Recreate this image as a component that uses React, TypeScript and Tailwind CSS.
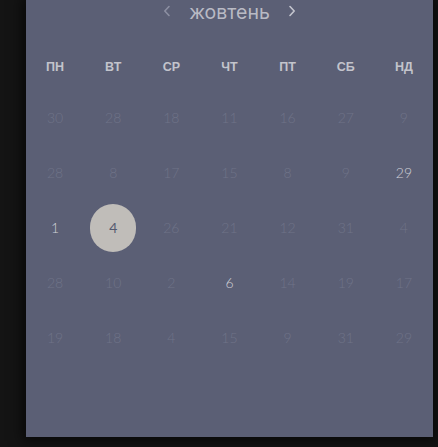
const weekdays = ['ПН', 'ВТ', 'СР', 'ЧТ', 'ПТ', 'СБ', 'НД'];

type Day = { n: number; bright?: boolean; selected?: boolean };

const rows: Day[][] = [
  [{ n: 30 }, { n: 28 }, { n: 18 }, { n: 11 }, { n: 16 }, { n: 27 }, { n: 9 }],
  [{ n: 28 }, { n: 8 }, { n: 17 }, { n: 15 }, { n: 8 }, { n: 9 }, { n: 29, bright: true }],
  [{ n: 1, bright: true }, { n: 4, selected: true }, { n: 26 }, { n: 21 }, { n: 12 }, { n: 31 }, { n: 4 }],
  [{ n: 28 }, { n: 10 }, { n: 2 }, { n: 6, bright: true }, { n: 14 }, { n: 19 }, { n: 17 }],
  [{ n: 19 }, { n: 18 }, { n: 4 }, { n: 15 }, { n: 9 }, { n: 31 }, { n: 29 }],
];

function Chevron({ dir, color }: { dir: 'left' | 'right'; color: string }) {
  return (
    <svg width="8" height="12" viewBox="0 0 8 12" fill="none" stroke={color} strokeWidth="1.6" strokeLinecap="round" strokeLinejoin="round">
      {dir === 'left' ? <path d="M6 1.5 1.8 6 6 10.5" /> : <path d="M2 1.5 6.2 6 2 10.5" />}
    </svg>
  );
}

export default function App() {
  return (
    <div className="h-[447px] w-[438px] overflow-hidden bg-[#141414] pl-[26px] font-['Lato','Liberation_Sans',sans-serif]">
      <div className="flex h-[437px] w-[407px] flex-col bg-[#5b5f75] shadow-[0_0_12px_4px_rgba(0,0,0,0.6)]">
        <div className="flex h-[26px] items-center justify-center gap-[18px] text-[#b9bac4]">
          <span className="-mt-[4px]"><Chevron dir="left" color="#8c8fa2" /></span>
          <span className="text-[19.5px] leading-none font-['Inter','Liberation_Sans',sans-serif]">жовтень</span>
          <span className="-mt-[4px]"><Chevron dir="right" color="#c4c5ce" /></span>
        </div>
        <div className="mt-[29px] grid grid-cols-7 font-['Liberation_Sans',sans-serif]">
          {weekdays.map((w) => (
            <div key={w} className="flex h-[24px] items-center justify-center text-[12.5px] font-bold text-[#c3c4cc]">
              {w}
            </div>
          ))}
        </div>
        <div className="mt-[11px] flex flex-col">
          {rows.map((r, i) => (
            <div key={i} className="grid h-[55px] grid-cols-7">
              {r.map((d, j) => (
                <div key={j} className="flex items-center justify-center">
                  {d.selected ? (
                    <span className="flex h-[48px] w-[46px] items-center justify-center rounded-full bg-[#c0bdb9] text-[14px] text-[#555a70]">
                      {d.n}
                    </span>
                  ) : (
                    <span className={`text-[14px] font-light ${d.bright ? 'text-[#d0d1d8]' : 'text-[#6f7388]'}`}>
                      {d.n}
                    </span>
                  )}
                </div>
              ))}
            </div>
          ))}
        </div>
      </div>
    </div>
  );
}
